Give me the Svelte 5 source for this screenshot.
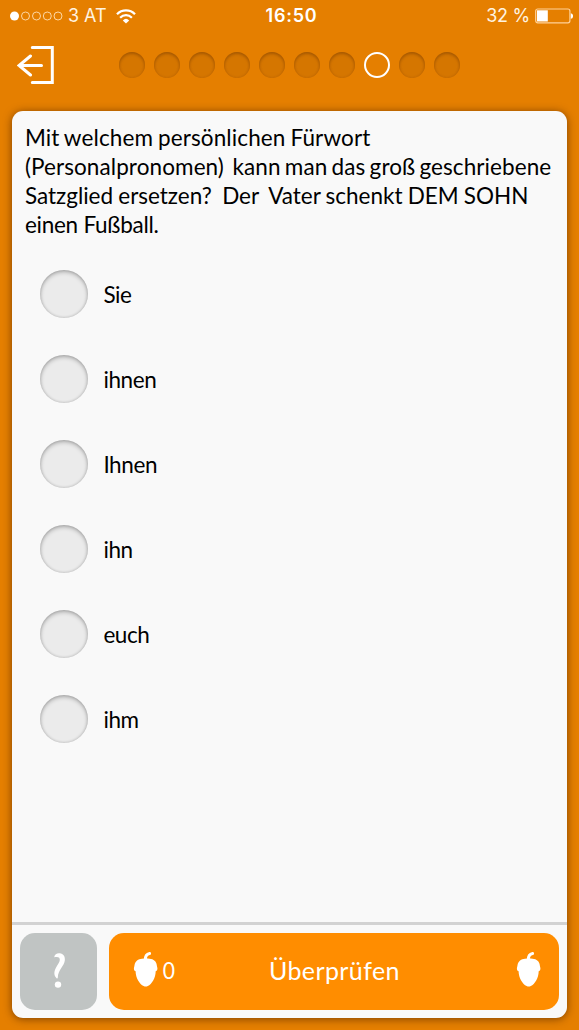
<script>
  const steps = Array.from({ length: 10 }, (_, i) => i)
  const current = 7

  const question = [
    { text: 'Mit welchem persönlichen Fürwort', fit: 'l1' },
    { text: '(Personalpronomen)  kann man das groß geschriebene', fit: 'l2' },
    { text: 'Satzglied ersetzen?  Der  Vater schenkt DEM SOHN', fit: 'l3' },
    { text: 'einen Fußball.', fit: 'l4' }
  ]
  const answers = ['Sie', 'ihnen', 'Ihnen', 'ihn', 'euch', 'ihm']

  let selected = $state(null)
</script>

{#snippet acorn()}
  <svg class="acorn" width="26" height="36" viewBox="0 0 26 36">
    <path d="M12.4 9 C12.2 5 13.8 3.1 16.6 2.6" fill="none" stroke="#fff" stroke-width="3" stroke-linecap="round" />
    <path
      d="M1 18.6 C.7 16.7 1.4 15.8 1.5 14.2 C2.2 10.2 5.2 8.1 9 7.8 C11.4 7.1 14.4 7.1 16.5 7.8 C20.7 8.1 23.4 10.5 23.8 14.2 C24 15.8 24.8 17 24.3 18.6 C24.1 19.8 23.2 20.3 22.7 20.3 C22.6 27 18.8 33.4 14.8 35 Q12.7 36 10.6 35 C6.6 33.4 2.7 27 2.6 20.3 C2 20.3 1.2 19.8 1 18.6 Z"
      fill="#fff" />
  </svg>
{/snippet}

<div class="screen">
  <header class="status">
    <div class="carrier">
      <svg width="53" height="12" viewBox="0 0 53 12">
        <circle cx="4.5" cy="6" r="4.5" fill="#fff" />
        {#each [15.5, 26.5, 37.3, 48] as cx}
          <circle {cx} cy="6" r="4" fill="none" stroke="#ffe0b5" stroke-width=".9" />
        {/each}
      </svg>
      <span class="network">3 AT</span>
      <svg class="wifi" width="20" height="15" viewBox="0 0 20 15" fill="none" stroke="#fff" stroke-width="2.3">
        <path d="M1 5.2 C6 .2 14 .2 19 5.2" />
        <path d="M4.1 8.7 C7.5 5.3 12.5 5.3 15.9 8.7" />
        <path d="M6.8 11.4 Q10 8.2 13.2 11.4 L10 14.6 Z" fill="#fff" stroke="none" />
      </svg>
    </div>
    <span class="time">16:50</span>
    <div class="power">
      <span>32 %</span>
      <svg width="38" height="16" viewBox="0 0 38 16">
        <rect x=".7" y="1" width="34.2" height="13.8" rx="2" fill="none" stroke="#ffd198" stroke-width="1.2" />
        <rect x="2" y="2.3" width="10.8" height="11.2" fill="#fff" />
        <path d="M35.8 5.2 Q38.2 5.5 38 8 Q38.2 10.5 35.8 10.8 Z" fill="#fff" />
      </svg>
    </div>
  </header>

  <nav class="top">
    <button class="exit" aria-label="Beenden">
      <svg width="38" height="40" viewBox="0 0 38 40" fill="none" stroke="#fff" stroke-width="3" stroke-linecap="round">
        <path d="M15.3 2.6 H35.3 V37.4 H15.3" />
        <path d="M24.5 20.5 H2.2 M13.5 11 L2 20.5 L13.5 30" />
      </svg>
    </button>
    <div class="steps">
      {#each steps as step}
        <i class="step" class:current={step === current}></i>
      {/each}
    </div>
  </nav>

  <main class="card">
    <section class="content">
      <div class="question">
        {#each question as line}
          <div class={line.fit}>{line.text}</div>
        {/each}
      </div>
      <div class="answers">
        {#each answers as answer, i}
          <button class="answer" class:selected={selected === i} onclick={() => (selected = i)}>
            <i class="radio"></i>
            <span class="text">{answer}</span>
          </button>
        {/each}
      </div>
    </section>
    <footer class="actions">
      <button class="help" aria-label="Hilfe">
        <svg width="14" height="38" viewBox="0 0 14 38">
          <path
            d="M1.2 5.2 C1.6 2.2 4 1 6.7 1.3 C10.4 1.7 12.3 4.5 11.8 8.6 C11.2 14.1 5 18.2 4.8 25.6 Q4.7 26.7 3.8 26.4 C.1 23 1.2 18.6 3.5 14.8 C6 10.8 7.8 8.2 6.2 5.8 C5 4.5 3.2 5 1.2 5.2 Z"
            fill="#fff" />
          <circle cx="5" cy="32.6" r="3.2" fill="#fff" />
        </svg>
      </button>
      <button class="check">
        <span class="score">{@render acorn()}<span class="count">0</span></span>
        <span class="label">Überprüfen</span>
        <span class="goal">{@render acorn()}</span>
      </button>
    </footer>
  </main>
</div>

<style>
  :global(body) {
    margin: 0;
    background: #e57f00;
  }
  .screen {
    box-sizing: border-box;
    width: 579px;
    height: 1030px;
    display: flex;
    flex-direction: column;
    padding: 0 12px 12.5px 12.4px;
    background: #e57f00;
    font-family: Lato, "Gill Sans", sans-serif;
    color: #000;
    overflow: hidden;
  }
  button {
    border: 0;
    padding: 0;
    background: none;
    font: inherit;
    color: inherit;
    cursor: pointer;
  }
  svg {
    display: block;
    flex: none;
  }
  .status {
    height: 32px;
    display: grid;
    grid-template-columns: 1fr auto 1fr;
    align-items: center;
    margin: 0 -4px 0 -2.5px;
    font-family: Inter, Roboto, sans-serif;
    font-size: 18px;
    line-height: 32px;
    color: #fff3e0;
  }
  .carrier,
  .power {
    display: flex;
    align-items: center;
  }
  .network {
    margin-left: 5px;
    width: 40px;
    white-space: nowrap;
  }
  .wifi {
    margin-left: 8px;
  }
  .time {
    color: #fff;
    font-weight: 600;
    letter-spacing: 0.75px;
    margin-left: 2px;
  }
  .power {
    justify-content: flex-end;
    gap: 5px;
  }
  .power span {
    letter-spacing: -0.25px;
  }
  .power svg {
    margin-right: -2px;
  }
  .top {
    height: 79px;
    flex: none;
    display: flex;
    align-items: flex-start;
  }
  .exit {
    margin: 13px 0 0 4.6px;
  }
  .steps {
    display: flex;
    gap: 9px;
    margin: 20px 0 0 64px;
  }
  .step {
    box-sizing: border-box;
    width: 26px;
    height: 26px;
    border-radius: 50%;
    background: #d57600;
    box-shadow: inset 0 2px 3px rgba(110, 55, 0, 0.4), inset 0 0 3px rgba(110, 55, 0, 0.2);
  }
  .step.current {
    border: 2px solid #fff;
    background: none;
    box-shadow: none;
  }
  .card {
    flex: 1;
    display: flex;
    flex-direction: column;
    min-height: 0;
    border-radius: 11px;
    background: #f9f9f9;
    box-shadow: 0 1px 9px rgba(70, 30, 0, 0.65);
  }
  .content {
    flex: 1;
    padding: 12px 12px 0 12.5px;
  }
  .question {
    font-size: 22.5px;
    line-height: 29px;
    height: 116px;
    white-space: pre;
  }
  .l1 {
    letter-spacing: 0.12px;
    word-spacing: -1px;
  }
  .l2 {
    letter-spacing: 0.09px;
    word-spacing: -1.6px;
  }
  .l3 {
    letter-spacing: 0;
    word-spacing: -0.6px;
  }
  .l4 {
    letter-spacing: -0.25px;
  }
  .answers {
    display: flex;
    flex-direction: column;
    gap: 37px;
    margin: 31px 0 0 15px;
  }
  .answer {
    display: flex;
    align-items: center;
    gap: 15.5px;
    height: 48px;
    font-size: 22.5px;
    line-height: 30px;
    letter-spacing: -0.4px;
  }
  .text {
    padding-top: 2px;
  }
  .radio {
    width: 48px;
    height: 48px;
    border-radius: 50%;
    background: #ebebeb;
    box-shadow: inset 0 2px 4px rgba(0, 0, 0, 0.25), inset 0 0 3px rgba(0, 0, 0, 0.18);
  }
  .selected .radio {
    background: #ff8d00;
  }
  .actions {
    height: 77px;
    display: flex;
    gap: 12px;
    padding: 8px 8px 8px 7.9px;
    border-top: 3px solid #d2d2d2;
  }
  .help {
    width: 77px;
    display: flex;
    align-items: center;
    justify-content: center;
    border-radius: 15px;
    background: #c0c4c3;
  }
  .help svg {
    margin-left: 2px;
  }
  .check {
    flex: 1;
    display: grid;
    grid-template-columns: 1fr auto 1fr;
    align-items: center;
    padding: 0 17px 0 23.5px;
    border-radius: 15px;
    background: #ff8d00;
    color: #fff;
    font-size: 25px;
  }
  .acorn {
    margin-bottom: 5px;
  }
  .label {
    letter-spacing: 0.4px;
    margin: 0 6px 2px 0;
  }
  .score {
    display: flex;
    align-items: center;
    gap: 3px;
  }
  .count {
    font-size: 24px;
    transform: scaleX(0.88);
    margin-bottom: 3px;
  }
  .goal {
    display: flex;
    justify-content: flex-end;
  }
</style>
